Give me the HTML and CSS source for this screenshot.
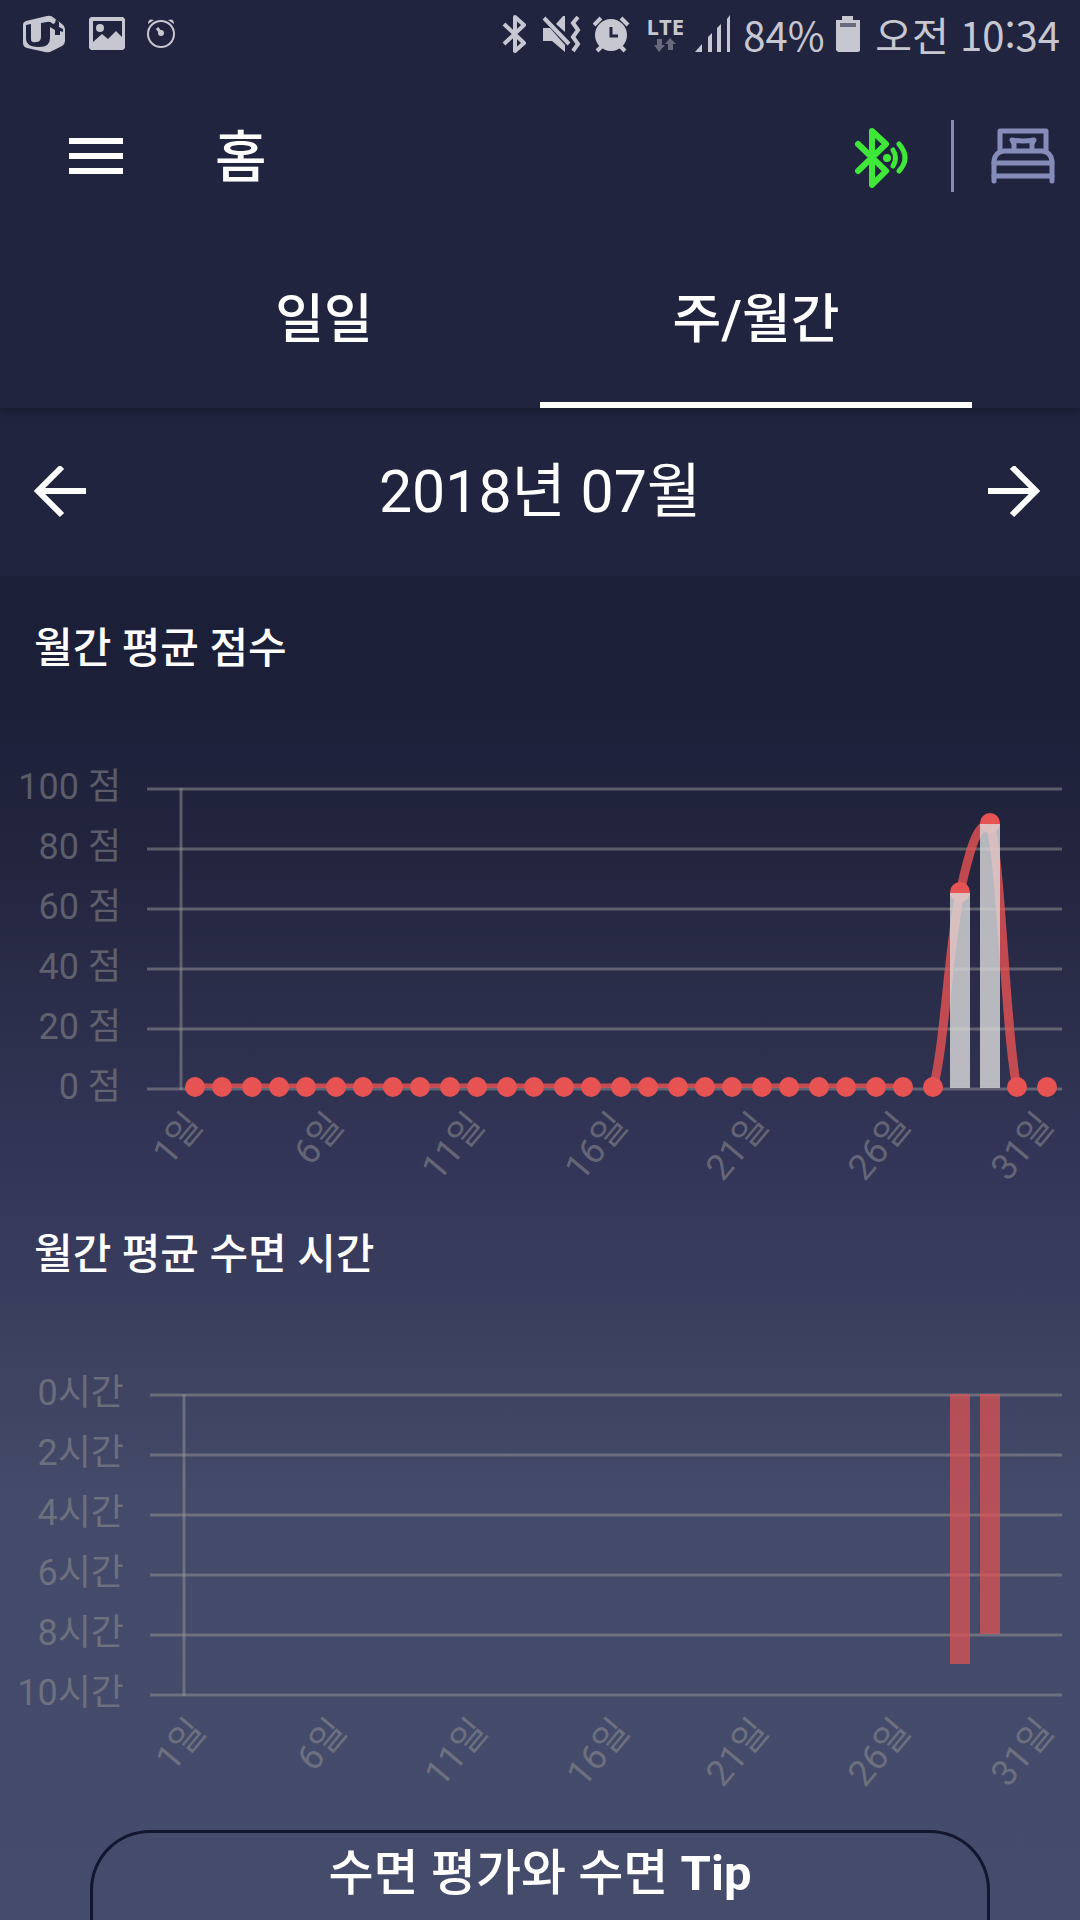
FILE: index.html
```
<!DOCTYPE html>
<html lang="ko">
<head>
    <meta charset="UTF-8">
    <meta name="viewport" content="width=device-width, initial-scale=1.0">
    <title>홈</title>
    <link rel="stylesheet" href="styles.css">
</head>
<body>
    <header class="header">
        <div class="status-bar">
            <div class="status-left">
                <svg width="44" height="38" viewBox="0 0 44 38">
                    <path class="fill" d="M3 6 L24 1 Q28 0 31 3 L39 9 Q42 11 42 14 V26 Q42 29 39 31 L29 36 Q26 38 22 37 L4 33 Q0 32 0 28 V10 Q0 7 3 6Z"/>
                    <path class="hole" d="M3 10 L8 9 V24 Q8 28 13 27 Q18 27 18 22 V8 L24 7 Q27 6 30 9 L32 8 L33 4 L36 7 L36 12 L40 14 V17 L37 16 V20 H32 V15 L27 12 V23 Q27 33 14 32 Q3 31 3 24Z"/>
                </svg>
                <svg width="36" height="38" viewBox="0 0 36 38">
                    <path class="fill" fill-rule="evenodd" d="M2 2 H34 L36 4 V33 L34 35 H2 L0 33 V4Z M4 6 V27 L13 19 L19 24 L27 16 L33 22 V6Z"/>
                    <circle class="fill" cx="11" cy="13" r="4"/>
                </svg>
                <svg width="30" height="38" viewBox="0 0 30 38">
                    <circle class="line" cx="14" cy="19" r="13" stroke-width="2"/>
                    <path class="fill" d="M1 9 Q1 3 7 5Z M27 9 Q27 3 21 5Z"/>
                    <circle class="fill" cx="14" cy="18" r="3"/>
                    <path class="line" d="M10 13 L14 18" stroke-width="3"/>
                </svg>
            </div>
            <div class="status-right">
                <svg width="28" height="38" viewBox="0 0 28 38">
                    <path class="line" d="M3 9 L23 28 L14 36 V2 L23 10 L3 29" stroke-width="4" stroke-linejoin="round"/>
                </svg>
                <svg width="40" height="38" viewBox="0 0 40 38">
                    <path class="fill" d="M2 13 H9 L24 30 V37 L11 26 H2Z M15 9 L22 1 H24 V17Z"/>
                    <path class="line" d="M3 3 L28 29" stroke-width="4"/>
                    <path class="line" d="M37 2 L32 8 L37 15 L32 22 L37 29 L32 36" stroke-width="4"/>
                </svg>
                <svg width="42" height="38" viewBox="0 0 42 38">
                    <circle class="fill" cx="18" cy="20" r="16"/>
                    <path class="line" d="M1 10 L8 3 M35 10 L28 3 M4 36 L9 31 M32 36 L27 31" stroke-width="4"/>
                    <path d="M18 12 V21 H25" fill="none" stroke="#21243e" stroke-width="3"/>
                </svg>
                <div class="lte">
                    <span>LTE</span>
                    <svg width="24" height="14" viewBox="0 0 24 14">
                        <path fill="#686a7c" d="M4 1 H9 V7 H12 L6 14 L1 7 H4Z M15 12 H20 V6 H23 L17 0 L12 6 H15Z"/>
                    </svg>
                </div>
                <svg width="36" height="38" viewBox="0 0 36 38">
                    <path class="fill" d="M0 37 L7 29 V37Z M13 37 V22 L17 18 V37Z M22 37 V13 L26 9 V37Z M32 37 V4 L35 0 V37Z"/>
                </svg>
                <span class="battery">84%</span>
                <svg width="28" height="38" viewBox="0 0 28 38">
                    <path class="fill" d="M7 1 H18 V5 H25 V36 L23 37 H3 L1 35 V5 H7Z"/>
                    <path fill="#686a7c" d="M5 8 H21 V12 H5Z"/>
                </svg>
                <span class="clock">오전 10:34</span>
            </div>
        </div>

        <div class="app-bar">
            <button class="icon-button" type="button" aria-label="메뉴">
                <svg width="54" height="36" viewBox="0 0 54 36">
                    <path fill="#fff" d="M0 0H54V6H0Z M0 15H54V21H0Z M0 30H54V36H0Z"/>
                </svg>
            </button>
            <h1 class="title">홈</h1>
            <div class="actions">
                <button class="icon-button" type="button" aria-label="블루투스">
                    <svg width="54" height="64" viewBox="0 -4 54 64">
                        <g fill="none" stroke="#3fe838" stroke-linecap="round" stroke-linejoin="round">
                            <path d="M3 16 L31 43 L17 57 V3 L31 16 L3 43" stroke-width="6"/>
                            <path d="M38 22 Q43 30 38 38 M44 16 Q56 30 44 43" stroke-width="5"/>
                        </g>
                        <circle cx="32" cy="30" r="4" fill="#3fe838"/>
                    </svg>
                </button>
                <span class="divider"></span>
                <button class="icon-button" type="button" aria-label="침대">
                    <svg width="64" height="58" viewBox="0 0 64 58">
                        <g fill="none" stroke="#858cb9" stroke-width="5" stroke-linecap="round" stroke-linejoin="round">
                            <path d="M9 24 V4 H55 V24"/>
                            <path d="M3 54 V34 Q4 25 13 24 H51 Q60 25 61 34 V54"/>
                            <path d="M3 36 H61 M3 49 H61"/>
                            <path d="M23 23 V17 L21 13 Q32 15 43 13 L41 17 V23"/>
                        </g>
                    </svg>
                </button>
            </div>
        </div>

        <nav class="tabs">
            <a class="tab" href="#daily">일일</a>
            <a class="tab active" href="#monthly">주/월간</a>
        </nav>
    </header>

    <div class="month-bar">
        <button class="icon-button" type="button" aria-label="이전 달">
            <svg width="58" height="52" viewBox="0 0 58 52">
                <path d="M52 25 H5 M28 1 L4 25 L28 49" fill="none" stroke="#fff" stroke-width="6"/>
            </svg>
        </button>
        <h2 class="month">2018년 07월</h2>
        <button class="icon-button" type="button" aria-label="다음 달">
            <svg width="58" height="52" viewBox="0 0 58 52">
                <path d="M0 25 H47 M24 1 L48 25 L24 49" fill="none" stroke="#fff" stroke-width="6"/>
            </svg>
        </button>
    </div>

    <main class="content">
        <section class="panel">
            <h3>월간 평균 점수</h3>
            <svg class="chart" id="scoreChart" viewBox="0 0 1080 504"></svg>
        </section>
        <section class="panel">
            <h3>월간 평균 수면 시간</h3>
            <svg class="chart" id="sleepChart" viewBox="0 0 1080 504"></svg>
        </section>
        <button class="tip-button" type="button">수면 평가와 수면 <b>Tip</b></button>
    </main>

    <script>
        const scores = new Array(31).fill(0);
        scores[27] = 65;
        scores[28] = 88;

        const hours = new Array(31).fill(0);
        hours[27] = 9;
        hours[28] = 8;

        const TOP = 110;
        const BOTTOM = 410;

        function dayX(i) {
            return 195 + Math.floor(i * 28.4 / 3 + 0.1) * 3;
        }

        function grid(labels, left, labelRight, dayEnds) {
            let out = '';
            labels.forEach((label, i) => {
                const y = TOP + 1 + i * 60;
                out += `<path class="grid" d="M${left} ${y} H1062"/>`;
                out += `<text class="label" x="${labelRight}" y="${y + 10}">${label}</text>`;
            });
            out += `<path class="grid" d="M${left + 34} ${TOP} V${BOTTOM + 2}"/>`;
            dayEnds.forEach((x, i) => {
                const day = i === 0 ? 1 : i * 5 + 1;
                out += `<text class="label" transform="translate(${x} 448) rotate(-50)">${day}일</text>`;
            });
            return out;
        }

        // cubic line through all points, 0.2 intensity, never above the higher point
        function curve(points) {
            const at = i => points[Math.max(0, Math.min(points.length - 1, i))];
            let d = `M${points[0]}`;
            for (let i = 1; i < points.length; i++) {
                const a = at(i - 1), b = at(i), before = at(i - 2), after = at(i + 1);
                const top = Math.min(a[1], b[1]);
                const y1 = a[1] + (b[1] - before[1]) * 0.2;
                const y2 = Math.max(top, b[1] - (after[1] - a[1]) * 0.2);
                d += ` C${a[0] + (b[0] - before[0]) * 0.2} ${y1}`;
                d += ` ${b[0] - (after[0] - a[0]) * 0.2} ${y2} ${b}`;
            }
            return d;
        }

        function drawScores() {
            const points = scores.map((s, i) => [dayX(i), BOTTOM - s * 3]);
            let out = grid(['100 점', '80 점', '60 점', '40 점', '20 점', '0 점'], 147, 121,
                [204, 345, 486, 629, 770, 912, 1055]);
            out += `<clipPath id="plot"><rect x="180" y="${TOP}" width="882" height="300"/></clipPath>`;
            out += `<path class="score-line" clip-path="url(#plot)" d="${curve(points)}"/>`;
            points.forEach(p => {
                out += `<circle class="dot" cx="${p[0]}" cy="${p[1] - 1}" r="10"/>`;
            });
            points.forEach((p, i) => {
                if (scores[i]) {
                    out += `<rect class="score-bar" x="${p[0] - 10}" y="${p[1]}" width="20" height="${BOTTOM - p[1]}"/>`;
                }
            });
            document.getElementById('scoreChart').innerHTML = out;
        }

        function drawHours() {
            let out = grid(['0시간', '2시간', '4시간', '6시간', '8시간', '10시간'], 150, 124,
                [207, 348, 489, 631, 770, 912, 1055]);
            hours.forEach((h, i) => {
                if (h) {
                    out += `<rect class="sleep-bar" x="${dayX(i) - 10}" y="${TOP}" width="20" height="${h * 30}"/>`;
                }
            });
            document.getElementById('sleepChart').innerHTML = out;
        }

        drawScores();
        drawHours();
    </script>
</body>
</html>
```
FILE: styles.css
```
* {
    box-sizing: border-box;
}
body {
    margin: 0;
    min-height: 100vh;
    display: flex;
    flex-direction: column;
    background-color: #454b6a;
    color: #fff;
    font-family: Roboto, "Noto Sans CJK KR", sans-serif;
}
h1, h2, h3 {
    margin: 0;
    font-weight: 500;
}
svg {
    display: block;
    flex-shrink: 0;
}
.header {
    position: relative;
    background-color: #21243e;
    box-shadow: 0 2px 8px rgba(10, 12, 30, 0.5);
}

/* status bar */
.status-bar {
    display: flex;
    justify-content: space-between;
    height: 72px;
    padding: 0 20px 4px 23px;
    align-items: center;
    color: #c7c7d1;
    font-family: "Noto Sans CJK KR", sans-serif;
    font-size: 40px;
    line-height: 64px;
    white-space: nowrap;
}
.status-left {
    display: flex;
    gap: 22px;
}
.status-right {
    display: flex;
    align-items: center;
    gap: 12px;
}
.fill {
    fill: #c7c7d1;
}
.hole {
    fill: #21243e;
}
.line {
    fill: none;
    stroke: #c7c7d1;
}
.lte {
    display: flex;
    flex-direction: column;
    align-items: center;
    gap: 2px;
    width: 36px;
    font: 700 22px/20px "Open Sans", sans-serif;
}
.battery {
    width: 80px;
}

/* app bar */
.app-bar {
    display: flex;
    align-items: center;
    height: 168px;
    padding: 0 25px 0 69px;
}
.icon-button {
    padding: 0;
    border: none;
    background: none;
    cursor: pointer;
}
.title {
    margin-left: 92px;
    padding-top: 4px;
    font-size: 56px;
    line-height: 72px;
}
.actions {
    display: flex;
    align-items: center;
    margin-left: auto;
}
.divider {
    width: 3px;
    height: 72px;
    margin: 0 37px 0 42px;
    background-color: #858cb9;
}

/* tabs */
.tabs {
    display: flex;
    height: 168px;
    padding: 0 10%;
}
.tab {
    flex: 1;
    padding-top: 44px;
    border-bottom: 6px solid transparent;
    color: #fff;
    font-size: 53px;
    font-weight: 500;
    line-height: 72px;
    text-align: center;
    text-decoration: none;
}
.tab.active {
    border-bottom-color: #fff;
}

/* month picker */
.month-bar {
    display: flex;
    align-items: center;
    justify-content: space-between;
    height: 168px;
    padding: 0 34px;
    background-color: #21243e;
}
.month {
    font-size: 59px;
    font-weight: 400;
    line-height: 72px;
}

/* charts */
.content {
    flex: 1;
    display: flex;
    flex-direction: column;
    background: linear-gradient(#1b1f38 0%, #1b1f38 6%, #23253f 21%, #2e314e 36%, #34375a 46%, #3b3f5e 55%, #444a69 69%, #454b6a 100%);
}
.panel h3 {
    padding: 44px 34px 0;
    font-size: 42px;
    line-height: 58px;
}
.chart {
    width: 100%;
    overflow: visible;
}
.grid {
    stroke: rgba(150, 150, 150, 0.5);
    stroke-width: 3;
}
.label {
    fill: rgba(150, 150, 150, 0.5);
    font-size: 36px;
    text-anchor: end;
}
.score-line {
    fill: none;
    stroke: #e75353;
    stroke-width: 9;
    opacity: 0.8;
}
.dot {
    fill: #e75353;
}
.score-bar {
    fill: #dcdcdc;
    opacity: 0.8;
}
.sleep-bar {
    fill: #e75353;
    opacity: 0.7;
}
.tip-button {
    flex: 1;
    margin: 42px 90px 0;
    padding: 0 0 16px;
    min-height: 90px;
    border: 3px solid #12162e;
    border-bottom: none;
    border-radius: 60px 60px 0 0;
    background-color: #454b6a;
    color: #fff;
    font-family: inherit;
    font-size: 49px;
    font-weight: 500;
    cursor: pointer;
}
```
